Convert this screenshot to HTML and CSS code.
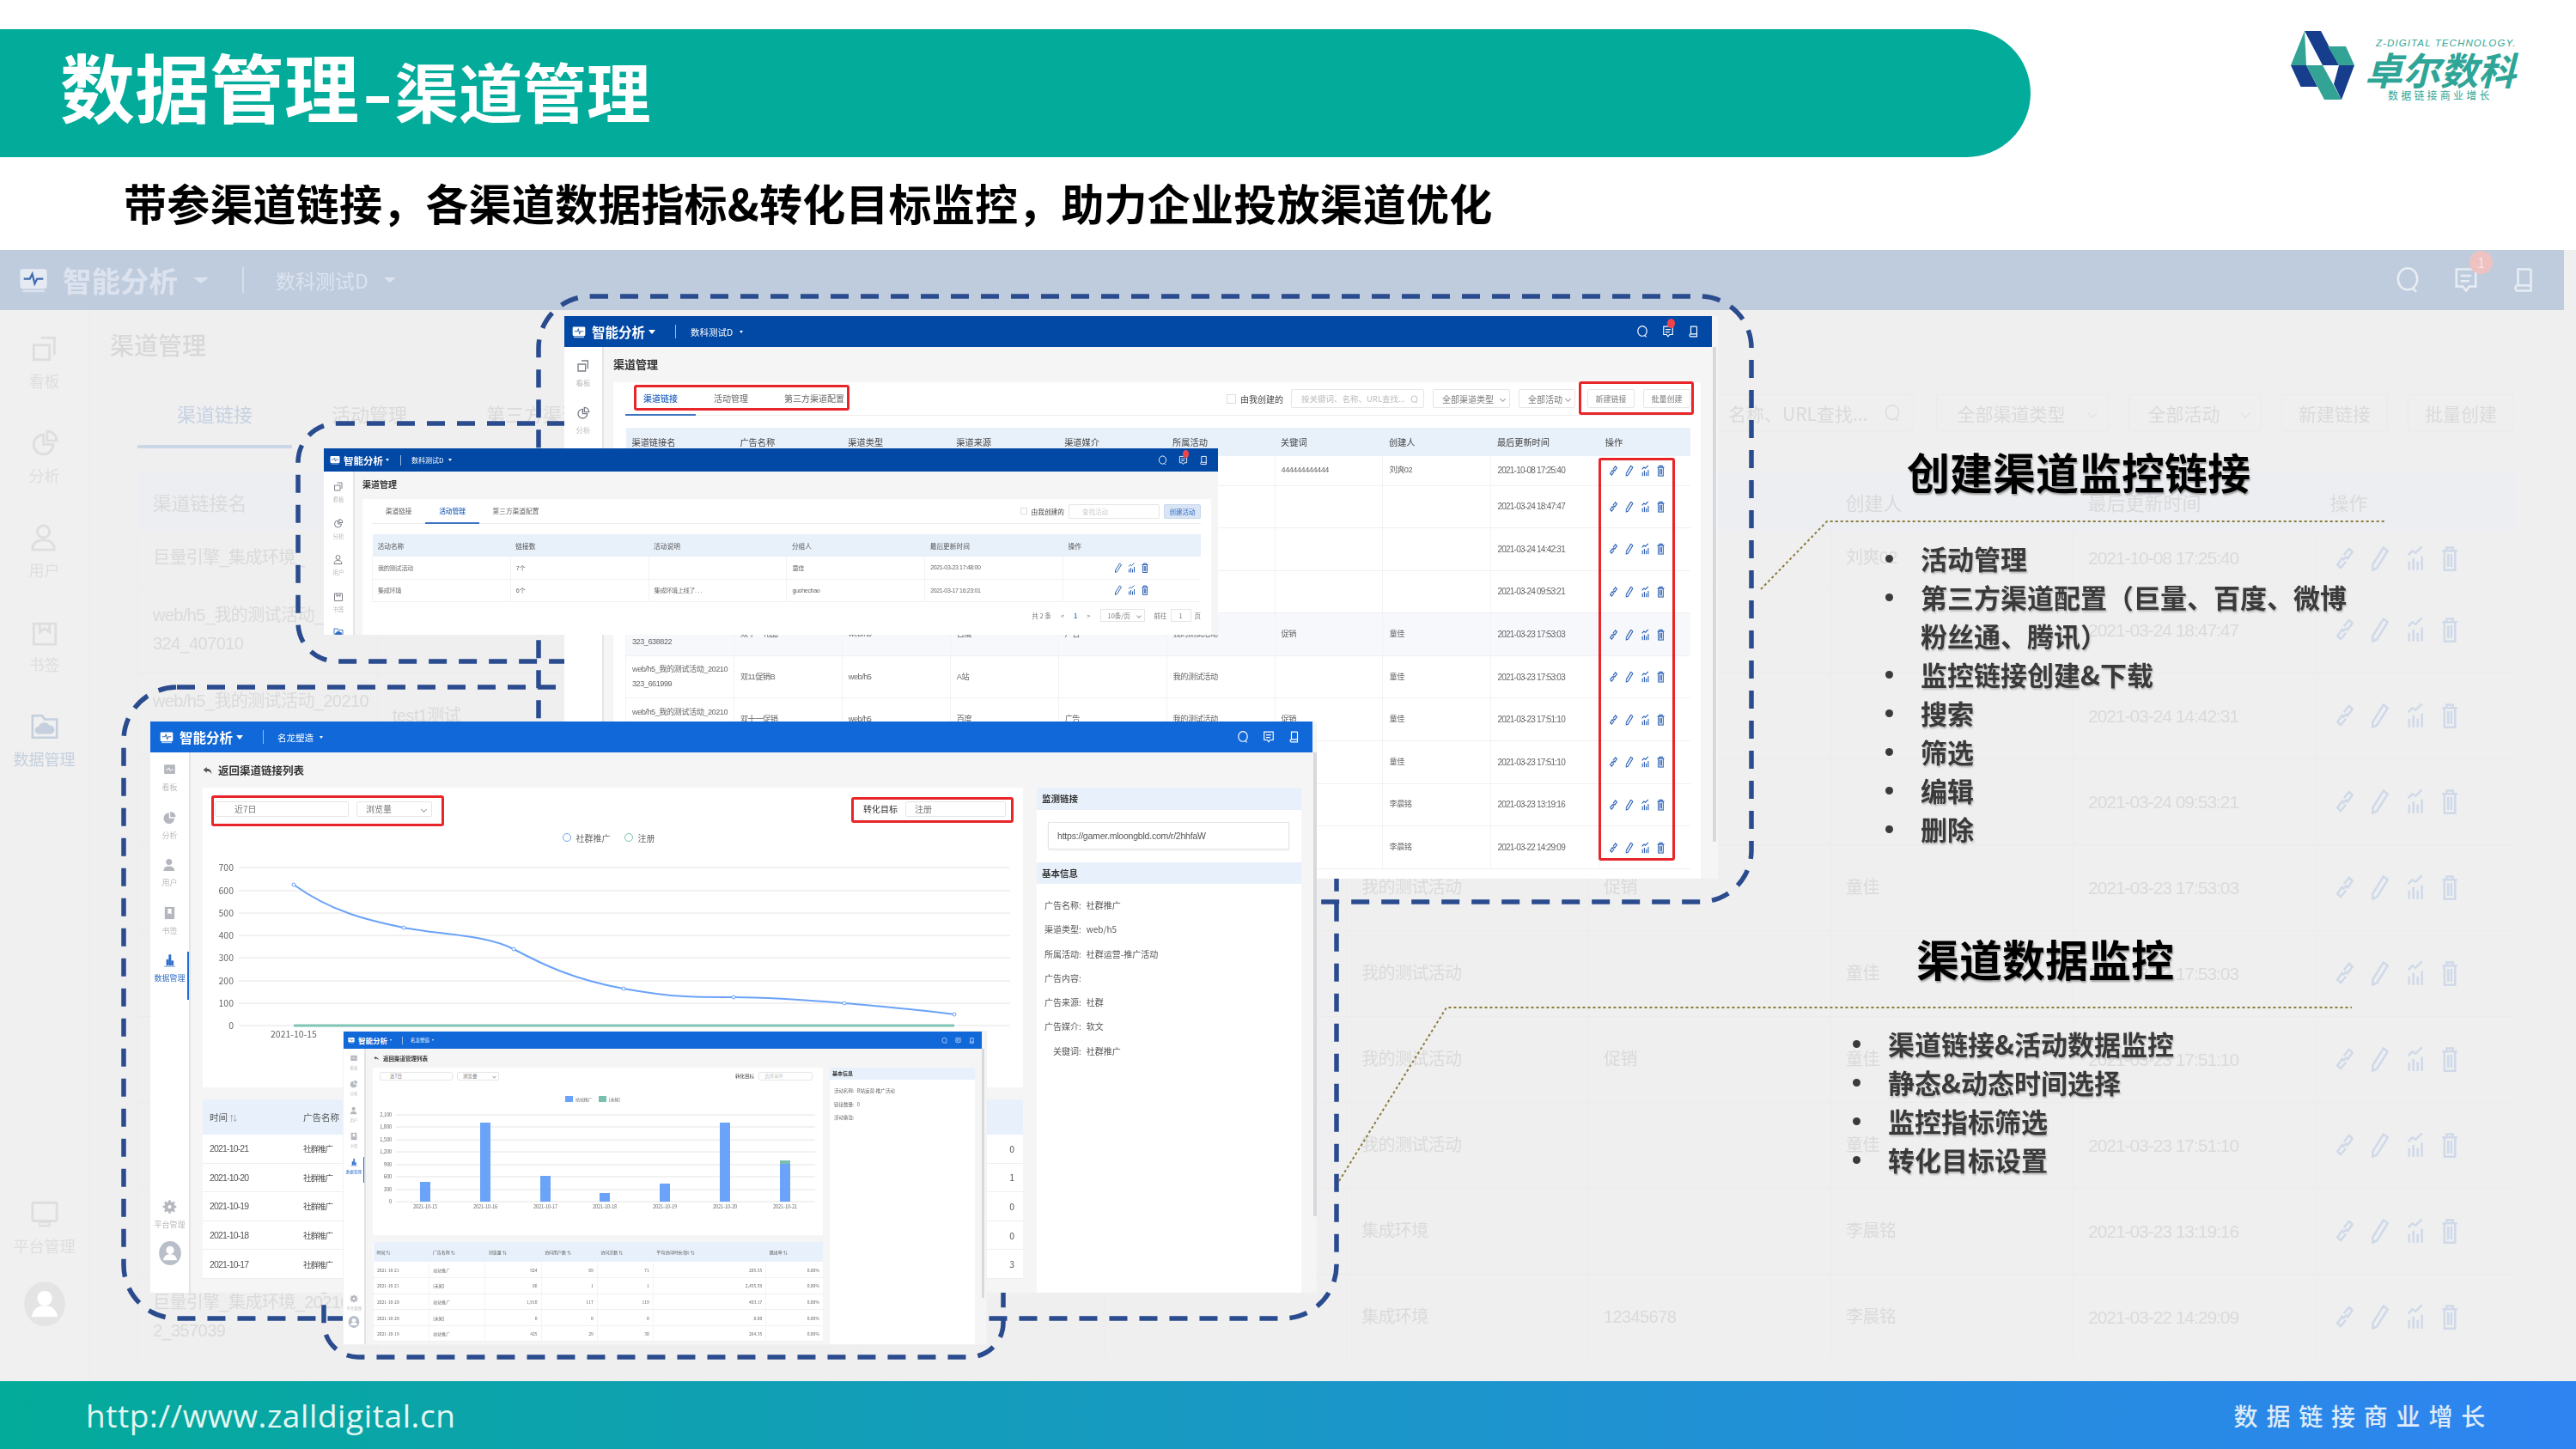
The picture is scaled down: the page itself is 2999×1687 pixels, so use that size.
FILE: index.html
```html
<!DOCTYPE html>
<html lang="zh-CN">
<head>
<meta charset="utf-8">
<title>数据管理-渠道管理</title>
<link rel="stylesheet" href="styles.css">
</head>
<body>
<svg class="defs" aria-hidden="true">
  <symbol id="i-board" viewBox="0 0 24 24"><path d="M9 3h11v14M3 9h13v12H3z" fill="none" stroke="currentColor" stroke-width="2"/></symbol>
  <symbol id="i-board2" viewBox="0 0 24 24"><rect x="3" y="4" width="18" height="15" rx="1" fill="currentColor"/><path d="M6 12h3l2-3 2 5 2-2h3" fill="none" stroke="#fff" stroke-width="1.4"/></symbol>
  <symbol id="i-pie" viewBox="0 0 24 24"><path d="M11 5a8 8 0 1 0 8 8h-8zM14 2a8 8 0 0 1 8 8h-8z" fill="none" stroke="currentColor" stroke-width="2"/></symbol>
  <symbol id="i-pie2" viewBox="0 0 24 24"><path d="M11 4a9 9 0 1 0 9 9h-9zM13 2a9 9 0 0 1 9 9h-9z" fill="currentColor"/></symbol>
  <symbol id="i-user" viewBox="0 0 24 24"><circle cx="11" cy="7" r="5" fill="none" stroke="currentColor" stroke-width="2"/><path d="M2 22c0-6 4-8 9-8s9 2 9 8z" fill="none" stroke="currentColor" stroke-width="2"/></symbol>
  <symbol id="i-user2" viewBox="0 0 24 24"><circle cx="11" cy="7" r="5" fill="currentColor"/><path d="M2 22c0-6 4-8 9-8s9 2 9 8z" fill="currentColor"/></symbol>
  <symbol id="i-mark" viewBox="0 0 24 24"><path d="M3 5h18v17H3zM8 5v7l4-3 4 3V5" fill="none" stroke="currentColor" stroke-width="2"/></symbol>
  <symbol id="i-mark2" viewBox="0 0 24 24"><path d="M4 2h16v20H4z" fill="currentColor"/><path d="M9 5v9l3-2 3 2V5" fill="#fff"/></symbol>
  <symbol id="i-folder" viewBox="0 0 24 24"><path d="M2 21V3h8l2 3h10v15z" fill="none" stroke="currentColor" stroke-width="1.8"/><path d="M7 18a3 3 0 0 1 0-6 5 5 0 0 1 9-1 3.500 3.500 0 0 1 1 7z" fill="currentColor"/></symbol>
  <symbol id="i-bars" viewBox="0 0 24 24"><path d="M3 22h18M7 20v-9h3v9zM11 20V3h3v17zM15 20v-7h3v7z" fill="currentColor" stroke="currentColor" stroke-width="1"/></symbol>
  <symbol id="i-gear" viewBox="0 0 24 24"><circle cx="12" cy="12" r="6" fill="none" stroke="currentColor" stroke-width="5"/><path d="M12 1v22M1 12h22M4 4l16 16M20 4L4 20" stroke="currentColor" stroke-width="3.500"/><circle cx="12" cy="12" r="3" fill="#fff"/></symbol>
  <symbol id="i-screen" viewBox="0 0 24 24"><rect x="2" y="3" width="20" height="15" rx="1" fill="none" stroke="currentColor" stroke-width="2"/><path d="M8 22h8v-3H8z" fill="none" stroke="currentColor" stroke-width="1.500"/></symbol>
  <symbol id="i-avatar" viewBox="0 0 24 24"><ellipse cx="12" cy="12" rx="11" ry="12" fill="currentColor"/><circle cx="12" cy="9" r="4" fill="#fff"/><path d="M5 19c1-5 4-6 7-6s6 1 7 6z" fill="#fff"/></symbol>
  <symbol id="i-link" viewBox="0 0 16 24"><path d="M7 9l5-6 3 3-5 7M9 15l-5 6-3-3 5-7M6 14l4-4" fill="none" stroke="currentColor" stroke-width="2"/></symbol>
  <symbol id="i-edit" viewBox="0 0 16 24"><path d="M11 2l4 3L5 21l-4 2 0-5z" fill="none" stroke="currentColor" stroke-width="2"/></symbol>
  <symbol id="i-chart" viewBox="0 0 16 24"><path d="M2 23v-8M6 23v-11M10 23v-8M14 23V10M1 9l4-4 3 2 6-6" fill="none" stroke="currentColor" stroke-width="2"/></symbol>
  <symbol id="i-trash" viewBox="0 0 16 24"><path d="M1 5h14M5 5V2h6v3M3 5v18h10V5M6.500 8v12M9.500 8v12" fill="none" stroke="currentColor" stroke-width="2"/></symbol>
  <symbol id="i-search" viewBox="0 0 24 24"><ellipse cx="12" cy="11" rx="9" ry="10" fill="none" stroke="currentColor" stroke-width="2"/><path d="M17 20l3 3" stroke="currentColor" stroke-width="2"/></symbol>
  <symbol id="i-msg" viewBox="0 0 24 24"><path d="M3 2h18v16h-6l-3 4-3-4H3zM7 8h10M7 13h8" fill="none" stroke="currentColor" stroke-width="2"/></symbol>
  <symbol id="i-book" viewBox="0 0 24 24"><path d="M18 2v20H6a2 2 0 0 1 0-5h12M6 17V2h12" fill="none" stroke="currentColor" stroke-width="2"/></symbol>
  <symbol id="i-logo" viewBox="0 0 24 20"><rect x="1" y="1" width="22" height="16" rx="2" fill="currentColor"/><path d="M4 9h5l2-4 2 8 2-4h5" fill="none" stroke="#3f6db0" stroke-width="1.600"/><path d="M3 18h18v2H3z" fill="currentColor" opacity=".7"/></symbol>
  <symbol id="i-back" viewBox="0 0 16 14"><path d="M1 6l6-5v3c5 0 8 3 8 9-2-4-4-5-8-5v3z" fill="currentColor"/></symbol>
  <symbol id="ops" viewBox="0 0 114 24"><use href="#i-link" x="0" width="16" height="24"/><use href="#i-edit" x="33" width="16" height="24"/><use href="#i-chart" x="66" width="16" height="24"/><use href="#i-trash" x="98" width="16" height="24"/></symbol>
</svg>

<div class="slide">
  <header class="head">
    <div class="head-top">
      <h1 class="title-bar"><span class="t-big">数据管理</span><span class="t-small"><span class="t-dash">-</span>渠道管理</span></h1>
      <div class="logo">
        <svg class="logo-mark" viewBox="0 0 74 81">
          <path d="M16 0L0 40h18z" fill="#33a396"/>
          <path d="M16 0h19l21 40H37z" fill="#173e8c"/>
          <path d="M43 18h21l10 22H56z" fill="#33a396"/>
          <path d="M0 40h18l13 25H11.500z" fill="#173e8c"/>
          <path d="M18 40h19l22 40H39z" fill="#33a396"/>
          <path d="M56 40h18L59 80 50 62z" fill="#173e8c"/>
        </svg>
        <div class="logo-text">
          <span class="logo-en">Z-DIGITAL TECHNOLOGY.</span>
          <span class="logo-cn">卓尔数科</span>
          <span class="logo-sub">数据链接商业增长</span>
        </div>
      </div>
    </div>
    <p class="subtitle">带参渠道链接，各渠道数据指标&amp;转化目标监控，助力企业投放渠道优化</p>
  </header>

  <section class="bg">
    <div class="bg-bar">
      <svg class="bg-logo"><use href="#i-logo"/></svg>
      <b class="bg-brand">智能分析</b><i class="caret bg-caret"></i>
      <i class="bg-div"></i>
      <span class="bg-org">数科测试D</span><i class="caret bg-caret2"></i>
      <div class="bg-bar-icons">
        <svg class="bg-ic"><use href="#i-search"/></svg>
        <span class="bg-msg"><svg class="bg-ic"><use href="#i-msg"/></svg><em class="bg-badge">1</em></span>
        <svg class="bg-ic"><use href="#i-book"/></svg>
      </div>
    </div>
    <div class="bg-body">
      <nav class="bg-side">
        <div class="bg-item"><svg><use href="#i-board"/></svg><span>看板</span></div>
        <div class="bg-item"><svg><use href="#i-pie"/></svg><span>分析</span></div>
        <div class="bg-item"><svg><use href="#i-user"/></svg><span>用户</span></div>
        <div class="bg-item"><svg><use href="#i-mark"/></svg><span>书签</span></div>
        <div class="bg-item bg-item-on"><svg><use href="#i-folder"/></svg><span>数据管理</span></div>
        <div class="bg-item bg-item-end"><svg><use href="#i-screen"/></svg><span>平台管理</span></div>
        <svg class="bg-avatar"><use href="#i-avatar"/></svg>
      </nav>
      <div class="bg-main">
        <h2 class="bg-title">渠道管理</h2>
        <div class="bg-head">
          <span class="bg-tab bg-tab-on">渠道链接</span><span class="bg-tab">活动管理</span><span class="bg-tab">第三方渠道配置</span>
          <div class="bg-filters">
            <span class="bg-ctl bg-input">按关键词、名称、URL查找...<svg class="bg-q"><use href="#i-search"/></svg></span>
            <span class="bg-ctl bg-sel1">全部渠道类型<i class="chev"></i></span>
            <span class="bg-ctl bg-sel2">全部活动<i class="chev"></i></span>
            <span class="bg-ctl bg-btn">新建链接</span>
            <span class="bg-ctl bg-btn">批量创建</span>
          </div>
        </div>
        <table class="bg-tbl">
          <thead><tr><th>渠道链接名</th><th>广告名称</th><th>渠道类型</th><th>渠道来源</th><th>渠道媒介</th><th>所属活动</th><th>关键词</th><th>创建人</th><th>最后更新时间</th><th>操作</th></tr></thead>
          <tbody>
            <tr><td>巨量引擎_集成环境_</td><td></td><td></td><td></td><td></td><td></td><td>444444444444</td><td>刘爽02</td><td class="num">2021-10-08 17:25:40</td><td><svg class="bg-ops"><use href="#ops"/></svg></td></tr>
            <tr><td>web/h5_我的测试活动_20210<br>324_407010</td><td></td><td></td><td></td><td></td><td></td><td></td><td></td><td class="num">2021-03-24 18:47:47</td><td><svg class="bg-ops"><use href="#ops"/></svg></td></tr>
            <tr><td>web/h5_我的测试活动_20210<br>324_407011</td><td>test1测试</td><td></td><td></td><td></td><td></td><td></td><td></td><td class="num">2021-03-24 14:42:31</td><td><svg class="bg-ops"><use href="#ops"/></svg></td></tr>
            <tr><td></td><td></td><td></td><td></td><td></td><td></td><td></td><td></td><td class="num">2021-03-24 09:53:21</td><td><svg class="bg-ops"><use href="#ops"/></svg></td></tr>
            <tr><td></td><td></td><td></td><td></td><td></td><td>我的测试活动</td><td>促销</td><td>童佳</td><td class="num">2021-03-23 17:53:03</td><td><svg class="bg-ops"><use href="#ops"/></svg></td></tr>
            <tr><td></td><td></td><td></td><td></td><td></td><td>我的测试活动</td><td></td><td>童佳</td><td class="num">2021-03-23 17:53:03</td><td><svg class="bg-ops"><use href="#ops"/></svg></td></tr>
            <tr><td></td><td></td><td></td><td></td><td></td><td>我的测试活动</td><td>促销</td><td>童佳</td><td class="num">2021-03-23 17:51:10</td><td><svg class="bg-ops"><use href="#ops"/></svg></td></tr>
            <tr><td></td><td></td><td></td><td></td><td></td><td>我的测试活动</td><td></td><td>童佳</td><td class="num">2021-03-23 17:51:10</td><td><svg class="bg-ops"><use href="#ops"/></svg></td></tr>
            <tr><td></td><td></td><td></td><td></td><td></td><td>集成环境</td><td></td><td>李晨铭</td><td class="num">2021-03-23 13:19:16</td><td><svg class="bg-ops"><use href="#ops"/></svg></td></tr>
            <tr><td>巨量引擎_集成环境_20210<br>2_357039</td><td></td><td></td><td></td><td></td><td>集成环境</td><td>12345678</td><td>李晨铭</td><td class="num">2021-03-22 14:29:09</td><td><svg class="bg-ops"><use href="#ops"/></svg></td></tr>
          </tbody>
        </table>
      </div>
    </div>
  </section>

  <footer class="foot">
    <span class="foot-url">http://www.zalldigital.cn</span>
    <span class="foot-slogan">数据链接商业增长</span>
  </footer>

  <svg class="dashes" viewBox="0 0 2999 1687">
    <rect x="627" y="345" width="1412" height="705" rx="60"/>
    <rect x="347" y="493" width="900" height="277" rx="45"/>
    <rect x="144" y="800" width="1412" height="735" rx="62"/>
    <rect x="377" y="1150" width="791" height="430" rx="40"/>
  </svg>

  <!-- window A -->
  <section class="win win-a">
    <div class="win-bar">
      <svg class="w-logo"><use href="#i-logo"/></svg><b class="w-brand">智能分析</b><i class="caret"></i><i class="w-div"></i><span class="w-org">数科测试D</span><i class="caret"></i>
      <div class="w-icons"><svg><use href="#i-search"/></svg><span class="w-msg"><svg><use href="#i-msg"/></svg><em class="w-badge"></em></span><svg><use href="#i-book"/></svg></div>
    </div>
    <div class="win-body">
      <nav class="win-side">
        <div class="w-item"><svg><use href="#i-board"/></svg><span>看板</span></div>
        <div class="w-item"><svg><use href="#i-pie"/></svg><span>分析</span></div>
      </nav>
      <div class="win-main">
        <h3 class="w-title">渠道管理</h3>
        <div class="w-card">
          <div class="w-head">
            <span class="w-tab w-tab-on">渠道链接</span><span class="w-tab">活动管理</span><span class="w-tab">第三方渠道配置</span>
            <div class="w-filters">
              <i class="w-check"></i><span class="w-mine">由我创建的</span>
              <span class="w-ctl a-input">按关键词、名称、URL查找...<svg class="w-q"><use href="#i-search"/></svg></span>
              <span class="w-ctl a-sel1">全部渠道类型<i class="chev"></i></span>
              <span class="w-ctl a-sel2">全部活动<i class="chev"></i></span>
              <span class="w-ctl a-btn">新建链接</span>
              <span class="w-ctl a-btn">批量创建</span>
            </div>
          </div>
          <table class="a-tbl">
            <thead><tr><th>渠道链接名</th><th>广告名称</th><th>渠道类型</th><th>渠道来源</th><th>渠道媒介</th><th>所属活动</th><th>关键词</th><th>创建人</th><th>最后更新时间</th><th>操作</th></tr></thead>
            <tbody>
              <tr class="r1"><td></td><td></td><td></td><td></td><td></td><td></td><td>444444444444</td><td>刘爽02</td><td class="num">2021-10-08 17:25:40</td><td><svg class="a-ops"><use href="#ops"/></svg></td></tr>
              <tr><td></td><td></td><td></td><td></td><td></td><td></td><td></td><td></td><td class="num">2021-03-24 18:47:47</td><td><svg class="a-ops"><use href="#ops"/></svg></td></tr>
              <tr><td></td><td></td><td></td><td></td><td></td><td></td><td></td><td></td><td class="num">2021-03-24 14:42:31</td><td><svg class="a-ops"><use href="#ops"/></svg></td></tr>
              <tr><td></td><td></td><td></td><td></td><td></td><td></td><td></td><td></td><td class="num">2021-03-24 09:53:21</td><td><svg class="a-ops"><use href="#ops"/></svg></td></tr>
              <tr class="r-tint"><td>web/h5_我的测试活动_20210<br>323_638822</td><td>双十一礼品</td><td>web/h5</td><td>百度</td><td>广告</td><td>我的测试活动</td><td>促销</td><td>童佳</td><td class="num">2021-03-23 17:53:03</td><td><svg class="a-ops"><use href="#ops"/></svg></td></tr>
              <tr><td>web/h5_我的测试活动_20210<br>323_661999</td><td>双11促销B</td><td>web/h5</td><td>A站</td><td></td><td>我的测试活动</td><td></td><td>童佳</td><td class="num">2021-03-23 17:53:03</td><td><svg class="a-ops"><use href="#ops"/></svg></td></tr>
              <tr><td>web/h5_我的测试活动_20210<br>323_561289</td><td>双十一促销</td><td>web/h5</td><td>百度</td><td>广告</td><td>我的测试活动</td><td>促销</td><td>童佳</td><td class="num">2021-03-23 17:51:10</td><td><svg class="a-ops"><use href="#ops"/></svg></td></tr>
              <tr><td></td><td></td><td></td><td></td><td></td><td></td><td></td><td>童佳</td><td class="num">2021-03-23 17:51:10</td><td><svg class="a-ops"><use href="#ops"/></svg></td></tr>
              <tr><td></td><td></td><td></td><td></td><td></td><td></td><td></td><td>李晨铭</td><td class="num">2021-03-23 13:19:16</td><td><svg class="a-ops"><use href="#ops"/></svg></td></tr>
              <tr><td></td><td></td><td></td><td></td><td></td><td></td><td></td><td>李晨铭</td><td class="num">2021-03-22 14:29:09</td><td><svg class="a-ops"><use href="#ops"/></svg></td></tr>
            </tbody>
          </table>
        </div>
      </div>
      <i class="w-scroll"></i>
    </div>
    <i class="red a-red1"></i><i class="red a-red2"></i><i class="red a-red3"></i>
  </section>

  <!-- window B -->
  <section class="win win-b">
    <div class="win-bar">
      <svg class="w-logo"><use href="#i-logo"/></svg><b class="w-brand">智能分析</b><i class="caret"></i><i class="w-div"></i><span class="w-org">数科测试D</span><i class="caret"></i>
      <div class="w-icons"><svg><use href="#i-search"/></svg><span class="w-msg"><svg><use href="#i-msg"/></svg><em class="w-badge"></em></span><svg><use href="#i-book"/></svg></div>
    </div>
    <div class="win-body">
      <nav class="win-side">
        <div class="w-item"><svg><use href="#i-board"/></svg><span>看板</span></div>
        <div class="w-item"><svg><use href="#i-pie"/></svg><span>分析</span></div>
        <div class="w-item"><svg><use href="#i-user"/></svg><span>用户</span></div>
        <div class="w-item"><svg><use href="#i-mark"/></svg><span>书签</span></div>
        <div class="w-item w-on"><svg><use href="#i-folder"/></svg><span>数据管理</span></div>
      </nav>
      <div class="win-main">
        <h3 class="w-title">渠道管理</h3>
        <div class="w-card">
          <div class="w-head">
            <span class="w-tab">渠道链接</span><span class="w-tab w-tab-on">活动管理</span><span class="w-tab">第三方渠道配置</span>
            <div class="w-filters">
              <i class="w-check"></i><span class="w-mine">由我创建的</span>
              <span class="w-ctl b-input">查找活动</span>
              <span class="w-ctl b-btn">创建活动</span>
            </div>
          </div>
          <table class="b-tbl">
            <thead><tr><th>活动名称</th><th>链接数</th><th>活动说明</th><th>分组人</th><th>最后更新时间</th><th>操作</th></tr></thead>
            <tbody>
              <tr><td>我的测试活动</td><td>7个</td><td></td><td>童佳</td><td class="num">2021-03-23 17:48:00</td><td class="b-op"><svg class="b-ops"><use href="#i-edit" x="0" width="8" height="12"/><use href="#i-chart" x="15.500" width="8" height="12"/><use href="#i-trash" x="31" width="8" height="12"/></svg></td></tr>
              <tr><td>集成环境</td><td>6个</td><td>集成环境上线了. . .</td><td>guohechao</td><td class="num">2021-03-17 16:23:01</td><td class="b-op"><svg class="b-ops"><use href="#i-edit" x="0" width="8" height="12"/><use href="#i-chart" x="15.500" width="8" height="12"/><use href="#i-trash" x="31" width="8" height="12"/></svg></td></tr>
            </tbody>
          </table>
          <div class="b-pager"><span>共 2 条</span><span class="b-nav">&lt;</span><b>1</b><span class="b-nav">&gt;</span><span class="b-size">10条/页<i class="chev"></i></span><span>前往</span><span class="b-jump">1</span><span>页</span></div>
        </div>
      </div>
    </div>
  </section>

  <!-- window C -->
  <section class="win win-c">
    <div class="win-bar">
      <svg class="w-logo"><use href="#i-logo"/></svg><b class="w-brand">智能分析</b><i class="caret"></i><i class="w-div"></i><span class="w-org">名龙塑造</span><i class="caret"></i>
      <div class="w-icons"><svg><use href="#i-search"/></svg><span class="w-msg"><svg><use href="#i-msg"/></svg></span><svg><use href="#i-book"/></svg></div>
    </div>
    <div class="win-body">
      <nav class="win-side">
        <div class="w-item"><svg><use href="#i-board2"/></svg><span>看板</span></div>
        <div class="w-item"><svg><use href="#i-pie2"/></svg><span>分析</span></div>
        <div class="w-item"><svg><use href="#i-user2"/></svg><span>用户</span></div>
        <div class="w-item"><svg><use href="#i-mark2"/></svg><span>书签</span></div>
        <div class="w-item w-on w-active"><svg><use href="#i-bars"/></svg><span>数据管理</span></div>
        <div class="w-item w-end"><svg><use href="#i-gear"/></svg><span>平台管理</span></div>
        <svg class="w-avatar"><use href="#i-avatar"/></svg>
      </nav>
      <div class="win-main">
        <div class="w-back"><svg class="w-arrow"><use href="#i-back"/></svg><h3>返回渠道链接列表</h3></div>
        <div class="d-cols">
          <div class="d-left">
            <div class="d-card">
              <div class="d-filters">
                <span class="w-ctl d-range">近7日</span>
                <span class="w-ctl d-metric">浏览量<i class="chev"></i></span>
                <span class="d-goal">转化目标</span>
                <span class="w-ctl d-goalv">注册</span>
              </div>
              <div class="d-legend"><i class="lg-dot lg-blue"></i><span>社群推广</span><i class="lg-dot lg-green"></i><span>注册</span></div>
              <svg class="d-chart" viewBox="0 0 955 276">
                <g class="grid">
                  <path d="M42 20H940M42 47H940M42 73H940M42 99H940M42 125H940M42 152H940M42 178H940M42 204H940"/>
                </g>
                <g class="axis">
                  <text x="36" y="24">700</text><text x="36" y="51">600</text><text x="36" y="77">500</text><text x="36" y="103">400</text><text x="36" y="129">300</text><text x="36" y="156">200</text><text x="36" y="182">100</text><text x="36" y="208">0</text>
                </g>
                <path class="line-blue" d="M106 40C150 72 195 82 234 90S330 98 362 115S430 150 490 161S580 171 618 171S700 174 747 178S830 185 875 191"/>
                <path class="line-green" d="M106 204H875"/>
                <g class="pts">
                  <circle cx="106" cy="40" r="2"/><circle cx="234" cy="90" r="2"/><circle cx="362" cy="115" r="2"/><circle cx="490" cy="161" r="2"/><circle cx="618" cy="171" r="2"/><circle cx="747" cy="178" r="2"/><circle cx="875" cy="191" r="2"/>
                </g>
                <g class="xlab">
                  <text x="106" y="218">2021-10-15</text><text x="234" y="218">2021-10-16</text><text x="362" y="218">2021-10-17</text><text x="490" y="218">2021-10-18</text><text x="618" y="218">2021-10-19</text><text x="747" y="218">2021-10-20</text><text x="875" y="218">2021-10-21</text>
                </g>
              </svg>
            </div>
            <div class="c-tbl">
              <div class="c-row c-hd"><span>时间 <i class="sort">&#8645;</i></span><span>广告名称</span><span></span><span></span></div>
              <div class="c-row"><span class="num">2021-10-21</span><span>社群推广</span><span></span><span>0</span></div>
              <div class="c-row"><span class="num">2021-10-20</span><span>社群推广</span><span></span><span>1</span></div>
              <div class="c-row"><span class="num">2021-10-19</span><span>社群推广</span><span></span><span>0</span></div>
              <div class="c-row"><span class="num">2021-10-18</span><span>社群推广</span><span></span><span>0</span></div>
              <div class="c-row"><span class="num">2021-10-17</span><span>社群推广</span><span></span><span>3</span></div>
            </div>
          </div>
          <aside class="d-panel">
            <div class="d-phead">监测链接</div>
            <div class="c-url">https://gamer.mloongbld.com/r/2hhfaW</div>
            <div class="d-phead">基本信息</div>
            <dl class="d-info">
              <div><dt>广告名称:</dt><dd>社群推广</dd></div>
              <div><dt>渠道类型:</dt><dd>web/h5</dd></div>
              <div><dt>所属活动:</dt><dd>社群运营-推广活动</dd></div>
              <div><dt>广告内容:</dt><dd></dd></div>
              <div><dt>广告来源:</dt><dd>社群</dd></div>
              <div><dt>广告媒介:</dt><dd>软文</dd></div>
              <div class="d-kw"><dt>关键词:</dt><dd>社群推广</dd></div>
            </dl>
          </aside>
        </div>
      </div>
      <i class="w-scroll"></i>
    </div>
    <i class="red c-red1"></i><i class="red c-red2"></i>
  </section>

  <!-- window D -->
  <section class="win win-d">
    <div class="win-bar">
      <svg class="w-logo"><use href="#i-logo"/></svg><b class="w-brand">智能分析</b><i class="caret"></i><i class="w-div"></i><span class="w-org">名龙塑造</span><i class="caret"></i>
      <div class="w-icons"><svg><use href="#i-search"/></svg><span class="w-msg"><svg><use href="#i-msg"/></svg></span><svg><use href="#i-book"/></svg></div>
    </div>
    <div class="win-body">
      <nav class="win-side">
        <div class="w-item"><svg><use href="#i-board2"/></svg><span>看板</span></div>
        <div class="w-item"><svg><use href="#i-pie2"/></svg><span>分析</span></div>
        <div class="w-item"><svg><use href="#i-user2"/></svg><span>用户</span></div>
        <div class="w-item"><svg><use href="#i-mark2"/></svg><span>书签</span></div>
        <div class="w-item w-on w-active"><svg><use href="#i-bars"/></svg><span>数据管理</span></div>
        <div class="w-item w-end"><svg><use href="#i-gear"/></svg><span>平台管理</span></div>
        <svg class="w-avatar"><use href="#i-avatar"/></svg>
      </nav>
      <div class="win-main">
        <div class="w-back"><svg class="w-arrow"><use href="#i-back"/></svg><h3>返回渠道管理列表</h3></div>
        <div class="d-cols">
          <div class="d-left">
            <div class="d-card">
              <div class="d-filters">
                <span class="w-ctl d-range">近7日</span>
                <span class="w-ctl d-metric">浏览量<i class="chev"></i></span>
                <span class="d-goal">转化目标</span>
                <span class="w-ctl d-goalv">选择事件</span>
              </div>
              <div class="d-legend"><i class="lg-sq lg-blue"></i><span>站站推广</span><i class="lg-sq lg-green"></i><span>[未知]</span></div>
              <svg class="d-chart" viewBox="0 0 524 148">
                <g class="grid"><path d="M27 8H515M27 22H515M27 37H515M27 51H515M27 66H515M27 80H515M27 95H515M27 109H515"/></g>
                <g class="axis">
                  <text x="22" y="10">2,100</text><text x="22" y="24">1,800</text><text x="22" y="39">1,500</text><text x="22" y="53">1,200</text><text x="22" y="68">900</text><text x="22" y="82">600</text><text x="22" y="97">300</text><text x="22" y="111">0</text>
                </g>
                <g class="bars">
                  <rect x="55" y="86" width="12" height="23"/><rect x="125" y="17" width="12" height="92"/><rect x="195" y="79" width="12" height="30"/><rect x="264" y="99" width="12" height="10"/><rect x="334" y="88" width="12" height="21"/><rect x="404" y="17" width="12" height="92"/><rect x="474" y="65" width="12" height="44"/>
                </g>
                <rect class="bar-g" x="474" y="61" width="12" height="4"/>
                <g class="xlab">
                  <text x="61" y="117">2021-10-15</text><text x="131" y="117">2021-10-16</text><text x="201" y="117">2021-10-17</text><text x="270" y="117">2021-10-18</text><text x="340" y="117">2021-10-19</text><text x="410" y="117">2021-10-20</text><text x="480" y="117">2021-10-21</text>
                </g>
              </svg>
            </div>
            <table class="d-tbl">
              <thead><tr><th>时间 ⇅</th><th>广告名称 ⇅</th><th>浏览量 ⇅</th><th>访问用户数 ⇅</th><th>访问次数 ⇅</th><th>平均访问时长(秒) ⇅</th><th>跳出率 ⇅</th></tr></thead>
              <tbody>
                <tr><td>2021-10-21</td><td>站站推广</td><td>924</td><td>69</td><td>71</td><td>285.55</td><td>0.00%</td></tr>
                <tr><td>2021-10-21</td><td>[未知]</td><td>66</td><td>1</td><td>1</td><td>2,455.59</td><td>0.00%</td></tr>
                <tr><td>2021-10-20</td><td>站站推广</td><td>1,910</td><td>117</td><td>119</td><td>403.17</td><td>0.00%</td></tr>
                <tr><td>2021-10-20</td><td>[未知]</td><td>0</td><td>0</td><td>0</td><td>0.00</td><td>0.00%</td></tr>
                <tr><td>2021-10-19</td><td>站站推广</td><td>425</td><td>29</td><td>30</td><td>264.35</td><td>0.00%</td></tr>
              </tbody>
            </table>
          </div>
          <aside class="d-panel">
            <div class="d-phead">基本信息</div>
            <dl class="d-info">
              <div><dt>活动名称:</dt><dd>B站运营-推广活动</dd></div>
              <div><dt>链接数量:</dt><dd>0</dd></div>
              <div><dt>活动备注:</dt><dd></dd></div>
            </dl>
          </aside>
        </div>
      </div>
      <i class="w-scroll"></i>
    </div>
  </section>

  <svg class="leaders" viewBox="0 0 2999 1687">
    <path d="M2050 686L2127 607H2777"/>
    <path d="M1559 1375L1684 1173H2738"/>
  </svg>

  <aside class="note note-a">
    <h2 class="note-title">创建渠道监控链接</h2>
    <ul class="note-list">
      <li>活动管理</li>
      <li>第三方渠道配置（巨量、百度、微博<br>粉丝通、腾讯）</li>
      <li>监控链接创建&amp;下载</li>
      <li>搜索</li>
      <li>筛选</li>
      <li>编辑</li>
      <li>删除</li>
    </ul>
  </aside>
  <aside class="note note-b">
    <h2 class="note-title">渠道数据监控</h2>
    <ul class="note-list">
      <li>渠道链接&amp;活动数据监控</li>
      <li>静态&amp;动态时间选择</li>
      <li>监控指标筛选</li>
      <li>转化目标设置</li>
    </ul>
  </aside>
</div>
</body>
</html>
```

FILE: styles.css
```css
*{box-sizing:border-box;margin:0;padding:0}
html,body{background:#fff}
body{width:2999px;height:1687px;overflow:hidden;font-family:"Noto Sans CJK SC","Noto Sans",sans-serif}
i,em{font-style:normal}
.defs{position:absolute;width:0;height:0}
.num{letter-spacing:-.05em;font-family:"Liberation Sans","Noto Sans CJK SC",sans-serif}

.slide{position:relative;width:2999px;height:1687px;overflow:hidden;display:flex;flex-direction:column}

/* header */
.head{height:291px;padding-top:34px;flex:none}
.head-top{display:flex;align-items:flex-start}
.title-bar{width:2364px;height:149px;background:#03AB9A;border-radius:0 75px 75px 0;color:#fff;display:flex;align-items:baseline;padding-left:70px;font-weight:700;line-height:131px;letter-spacing:0}
.t-big{font-size:87px}
.t-small{font-size:74.500px}
.t-dash{display:inline-block;margin:0 6px 0 8px;transform:scaleX(1.3)}
.logo{display:flex;margin:2px 0 0 303px;gap:12px}
.logo-mark{width:74px;height:81px;flex:none}
.logo-text{display:flex;flex-direction:column;color:#2fa597;width:180px;align-items:flex-start;padding-top:6px}
.logo-en{font:italic 400 11.500px/16px "Liberation Sans",sans-serif;letter-spacing:1.100px;margin-left:13px;white-space:nowrap}
.logo-cn{font-size:44px;font-weight:700;font-style:italic;line-height:44px;white-space:nowrap}
.logo-sub{font-size:12px;line-height:18px;letter-spacing:3.200px;margin-left:27px;white-space:nowrap}
.subtitle{margin:20px 0 0 144px;font-size:50px;font-weight:700;line-height:64px;color:#000;white-space:nowrap;letter-spacing:.2px}

/* faded background app */
.bg{flex:1;background:#EFEFF0;display:flex;flex-direction:column;min-height:0;filter:blur(.5px)}
.bg-bar{height:70px;width:2985px;background:#BFCCDE;flex:none;display:flex;align-items:center;padding-left:22px;color:#DCE3EE}
.bg-logo{width:34px;height:30px;margin-right:17px;color:#E6EBF3}
.bg-brand{font-size:33.500px;letter-spacing:0;line-height:70px}
.caret{display:inline-block;width:0;height:0;border-left:4px solid transparent;border-right:4px solid transparent;border-top:5px solid #fff}
.bg-caret{border-width:7px 9px 0;border-top-color:#DCE3EE;margin-left:18px}
.bg-div{width:2px;height:30px;background:#D7DEE9;margin:0 37px 0 39px}
.bg-org{font-size:23px}
.bg-caret2{border-width:6px 7px 0;border-top-color:#DCE3EE;margin-left:18px}
.bg-bar-icons{margin-left:auto;display:flex;gap:38px;padding-right:31px;align-items:center}
.bg-ic{width:30px;height:38px;color:#E8EDF4;display:block}
.bg-msg{position:relative;display:block}
.bg-badge{position:absolute;left:19px;top:-15px;width:27px;height:27px;border-radius:50%;background:#EFC2C2;color:#F7E3E3;font-size:16px;text-align:center;line-height:27px}
.bg-body{flex:1;display:flex;min-height:0}
.bg-side{width:104px;flex:none;background:#F0F0F0;display:flex;flex-direction:column;align-items:center;padding-top:28px;border-right:1px solid #ECECEC}
.bg-item{height:110px;display:flex;flex-direction:column;align-items:center;color:#DEDEDE;font-size:18px}
.bg-item svg{width:36px;height:34px;margin-bottom:8px}
.bg-item span{line-height:24px;white-space:nowrap}
.bg-item-on{color:#C5CFDE}
.bg-item-end{margin-top:auto;height:auto;margin-bottom:30px}
.bg-avatar{width:56px;height:52px;color:#E4E4E4;margin-bottom:64px}
.bg-main{flex:1;min-width:0;padding-left:24px}
.bg-title{font-size:28px;font-weight:500;color:#D8D8D8;line-height:40px;padding:20px 0 21px 0}
.bg-head{display:flex;margin-left:32px;width:2767px;height:80px;align-items:flex-start}
.bg-tab{padding:0 46px;text-align:center;font-size:22px;color:#DADADA;height:80px;line-height:78px;flex:none;white-space:nowrap}
.bg-tab-on{color:#C6D1E0;border-bottom:4px solid #CBD6E6}
.bg-filters{margin-left:auto;display:flex;gap:23px;padding-top:17px}
.bg-ctl{height:43px;border:1px solid #EAEAEA;border-radius:3px;color:#DADADA;font-size:21px;line-height:40px;display:flex;align-items:center;justify-content:center;white-space:nowrap;position:relative}
.bg-input{width:340px;justify-content:flex-start;padding-left:18px;margin-right:3px}
.bg-q{width:20px;height:26px;position:absolute;right:14px;top:8px;color:#DEDEDE}
.bg-sel1{width:201px;padding-right:26px}
.bg-sel2{width:155px;padding-right:26px}
.bg-btn{width:124px}
.chev{position:absolute;right:14px;top:42%;width:8px;height:8px;border-right:1px solid currentColor;border-bottom:1px solid currentColor;transform:rotate(45deg);opacity:.7}
.bg-tbl{margin:28px 0 0 32px;border-collapse:collapse;table-layout:fixed;width:2767px;font-size:22px;color:#DADADA;font-family:"Liberation Sans","Noto Sans CJK SC",sans-serif}
.bg-tbl th{height:67px;background:#ECEEF2;font-weight:400;text-align:left;padding-left:17px}
.bg-tbl th:first-child,.bg-tbl td:first-child{width:279px}
.bg-tbl th:nth-child(n+2){width:282px}
.bg-tbl th:last-child{width:232px}
.bg-tbl td{height:100px;padding-left:17px;line-height:33px;border-bottom:1px solid #EBEBEB;border-left:1px solid #ECECEC;white-space:nowrap;overflow:visible;font-size:20px;letter-spacing:-.6px}
.bg-tbl .num{font-size:21px;letter-spacing:-1.050px}
.bg-tbl tbody tr:first-child td{height:66px}
.bg-ops{width:142px;height:30px;color:#CFD9E8;display:block;margin-left:7px}

/* dashes */
.dashes{position:absolute;left:0;top:0;width:2999px;height:1687px;fill:none;stroke:#2A4B8D;stroke-width:5.500;stroke-dasharray:21 14}
.dashes rect{fill:none}
.leaders{position:absolute;left:0;top:0;width:2999px;height:1687px;fill:none;stroke:#8C7C38;stroke-width:2;stroke-dasharray:3 3}

/* windows on canvas */
.win{position:absolute;display:flex;flex-direction:column;background:#F5F5F5;overflow:hidden;color:#666;filter:blur(.35px)}
.win-bar{display:flex;align-items:center;color:#fff;flex:none;position:relative}
.w-div{display:block;background:#9DB8DD;width:1px}
.w-icons{margin-left:auto;display:flex;align-items:center}
.w-msg{display:block;position:relative}
.w-badge{position:absolute;border-radius:50%;background:#F0444C;display:block}
.win-body{flex:1;display:flex;min-height:0;position:relative}
.win-side{flex:none;background:#fff;border-right:2px solid #E4E4E4;display:flex;flex-direction:column;align-items:center;color:#555;overflow:hidden}
.w-item{display:flex;flex-direction:column;align-items:center;flex:none;color:#7A7F87}
.win-c .w-item,.win-d .w-item{color:#B4B8BE}
.w-item span{white-space:nowrap;color:#BBB}
.win-c .w-on,.win-d .w-on,.w-on,.w-on span{color:#2E6BC6}
.w-active{position:relative;align-self:stretch}
.w-active::after{content:"";position:absolute;right:0;top:0;bottom:0;background:#1A6CDA}
.w-end{margin-top:auto}
.w-avatar{color:#B8BFC8;flex:none}
.win-main{flex:1;min-width:0;display:flex;flex-direction:column}
.w-title{font-weight:700;color:#333}
.w-card{background:#fff}
.w-head{display:flex;align-items:center;border-bottom:1px solid #EEE}
.w-tab{display:block;flex:none;text-align:center;color:#666;white-space:nowrap;border-bottom:2px solid transparent}
.w-tab-on{color:#2463BE;border-bottom-color:#3F74BE;font-weight:500}
.w-filters{margin-left:auto;display:flex;align-items:center}
.w-check{display:block;border:1px solid #DDD;flex:none}
.w-mine{color:#444;white-space:nowrap}
.w-ctl{border:1px solid #E6E6E6;border-radius:2px;display:flex;align-items:center;white-space:nowrap;color:#777;background:#fff;position:relative;flex:none}
.w-scroll{position:absolute;right:1px;top:0;width:4px;background:#D8D9DC}
.red{position:absolute;display:block;border:3px solid #E8262A;border-radius:3px}

/* window A */
.win-a{left:657px;top:368px;width:1343px;height:655px}
.win-a .win-bar{height:36px;width:1336px;background:#0248A5;padding-left:9px}
.win-a .w-logo{width:16px;height:15px;margin-right:7px;color:#fff}
.win-a .w-brand{font-size:15.500px}
.win-a .caret{margin-left:4px}
.win-a .w-div{height:16px;margin:0 17px 0 23px}
.win-a .w-org{font-size:10.500px}
.win-a .w-org+.caret{margin-left:8px;border-width:3px 2px 0}
.win-a .w-icons{gap:16px;padding-right:14px}
.win-a .w-icons svg{width:14px;height:18px;display:block}
.win-a .w-badge{width:9px;height:11px;left:6px;top:-6px}
.win-a .win-side{width:46px;padding-top:12px}
.win-a .w-item{height:55px;font-size:8.500px}
.win-a .w-item svg{width:16px;height:20px;margin-bottom:3px}
.win-a .win-main{padding:0 20px 0 11px}
.win-a .w-title{font-size:13px;height:41px;line-height:40px}
.win-a .w-card{flex:1;padding:0 12px 0 14px}
.win-a .w-head{height:39px;margin:0 0 14px 0}
.win-a .w-tab{padding:0 21px;font-size:10px;line-height:37px;height:39px}
.win-a .w-filters{gap:10px;font-size:10px}
.win-a .w-check{width:11px;height:11px;margin-right:-5px}
.a-input{width:155px;height:22px;padding-left:11px;margin-left:-1px;color:#BBB;font-size:9.500px}
.w-q{position:absolute;right:6px;top:5px;width:9px;height:12px;color:#AAA}
.a-sel1{width:90px;height:22px;padding-left:10px}
.a-sel2{width:66px;height:22px;padding-left:10px;margin-right:4px}
.a-btn{width:55px;height:22px;justify-content:center;font-size:9px}
.a-sel1 .chev,.a-sel2 .chev{right:5px;width:5px;height:5px;top:40%}
.a-tbl{border-collapse:collapse;table-layout:fixed;width:1240px;font-size:10.200px;color:#666;font-family:"Liberation Sans","Noto Sans CJK SC",sans-serif}
.a-tbl th{height:33px;background:#E8F0FA;font-weight:400;text-align:left;padding-left:7px;color:#444;width:125.800px}
.a-tbl th:last-child{width:106px}
.a-tbl td{height:49.600px;padding-left:7px;line-height:17px;border-bottom:1px solid #F0F0F0;border-left:1px solid #F3F3F3;white-space:nowrap;font-size:9.200px;letter-spacing:-.5px}
.a-tbl .r1 td{height:34px}
.a-tbl .num{font-size:10px;letter-spacing:-.75px}
.r-tint td{background:#F7F8FB}
.a-ops{width:64px;height:14px;display:block;color:#2E63B5;margin-left:5px}
.a-red1{left:81px;top:80px;width:251px;height:30px}
.a-red2{left:1181px;top:76px;width:134px;height:39px}
.a-red3{left:1204px;top:165px;width:89px;height:469px}
.win-a .w-scroll{top:0;height:576px;right:2px}

/* window B */
.win-b{left:377px;top:522px;width:1041px;height:217px}
.win-b .win-bar{height:27px;background:#0248A5;padding-left:7px}
.win-b .w-logo{width:12px;height:11px;margin-right:4px;color:#fff}
.win-b .w-brand{font-size:11.500px}
.win-b .caret{margin-left:3px;border-width:3px 2px 0}
.win-b .w-div{height:12px;margin:0 12px 0 13px}
.win-b .w-org{font-size:8px}
.win-b .w-org+.caret{margin-left:5px}
.win-b .w-icons{gap:13px;padding-right:11px}
.win-b .w-icons svg{width:11px;height:14px;display:block}
.win-b .w-badge{width:7px;height:9px;left:5px;top:-5px}
.win-b .win-side{width:36px;padding-top:10px}
.win-b .w-item{height:42.500px;font-size:6.500px}
.win-b .w-item svg{width:12px;height:15px;margin-bottom:2px}
.win-b .win-main{padding:0 8px 0 9px}
.win-b .w-title{font-size:10px;height:32px;line-height:30px}
.win-b .w-card{flex:1;padding:0 12px 0 11px}
.win-b .w-head{height:29px;margin-bottom:12px}
.win-b .w-tab{padding:0 15.800px;font-size:7.700px;line-height:27px;height:29px}
.win-b .w-filters{gap:5px;font-size:7.700px}
.win-b .w-check{width:8px;height:8px}
.b-input{width:106px;height:17px;padding-left:15px;font-size:7.500px;color:#CCC}
.b-btn{width:43px;height:17px;justify-content:center;background:#D9E5F5;color:#2E6BC6;border-color:#C8D8EF;font-size:7.500px}
.b-tbl{border-collapse:collapse;table-layout:fixed;width:965px;font-size:7.700px;color:#666;font-family:"Liberation Sans","Noto Sans CJK SC",sans-serif}
.b-tbl th{height:26px;background:#E8F0FA;font-weight:400;text-align:left;padding-left:6px;width:160.800px;color:#555}
.b-tbl td{height:26px;padding-left:6px;border-bottom:1px solid #F0F0F0;border-left:1px solid #F3F3F3;white-space:nowrap;font-size:7.200px;letter-spacing:-.4px}
.b-tbl .num{font-size:7px;letter-spacing:-.35px}
.b-tbl td.b-op{padding-left:60px}
.b-ops{width:40px;height:12px;display:block;color:#2E63B5}
.b-pager{display:flex;align-items:center;justify-content:flex-end;font-size:7.500px;gap:11px;margin-top:8px;height:15px;color:#777}
.b-pager b{color:#2463BE;font-weight:500}
.b-size{width:52px;height:15px;border:1px solid #E6E6E6;display:flex;align-items:center;padding-left:8px;position:relative}
.b-size .chev{right:4px;width:4px;height:4px}
.b-jump{width:24px;height:15px;border:1px solid #E6E6E6;text-align:center;line-height:13px;margin:0 -7px}

/* window C + D share detail layout */
.win-c{left:175px;top:840px;width:1358px;height:665px}
.win-c .win-bar{height:36px;width:1353px;background:#1169D9;padding-left:11px}
.win-c .w-logo{width:16px;height:15px;margin-right:7px;color:#fff}
.win-c .w-brand{font-size:15.500px}
.win-c .caret{margin-left:4px}
.win-c .w-div{height:16px;margin:0 16px 0 23px}
.win-c .w-org{font-size:10.500px}
.win-c .w-org+.caret{margin-left:7px;border-width:3px 2px 0}
.win-c .w-icons{gap:16px;padding-right:14px}
.win-c .w-icons svg{width:14px;height:18px;display:block}
.win-c .win-side{width:47px;padding-top:10px;padding-bottom:32px}
.win-c .w-item{height:55.500px;font-size:9px}
.win-c .w-item svg{width:17px;height:20px;margin-bottom:4px}
.win-c .w-active::after{width:2px}
.win-c .w-avatar{width:28px;height:28px;margin-top:-4px}
.win-c .w-end{height:54px}
.win-c .win-main{padding:0 18px 0 14px;color:#666}
.w-back{display:flex;align-items:center;color:#333}
.w-back h3{font-weight:700}
.w-arrow{color:#555;display:block;flex:none}
.win-c .w-back{height:41px;gap:7px;padding-left:0}
.win-c .w-back h3{font-size:12.500px}
.win-c .w-arrow{width:11px;height:10px}
.d-cols{display:flex;flex:1;min-height:0}
.d-left{flex:none;display:flex;flex-direction:column;min-width:0}
.d-card{background:#fff;display:flex;flex-direction:column;flex:none}
.d-filters{display:flex;align-items:center}
.d-goal{margin-left:auto;white-space:nowrap;color:#333}
.d-legend{display:flex;align-items:center;justify-content:center;color:#666}
.d-legend span{white-space:nowrap}
.lg-dot{display:block;border:1px solid;border-radius:50%;background:#fff;flex:none;position:relative}
.lg-dot::before{content:"";position:absolute;left:-5px;right:-5px;top:50%;border-top:1px solid;z-index:-1}
.lg-dot.lg-blue{color:#6AA3F8}
.lg-dot.lg-green{color:#78BFB0}
.lg-sq.lg-blue{background:#6AA3F8}
.lg-sq.lg-green{background:#78BFB0}
.lg-sq{display:block;flex:none}
.d-chart{display:block;width:100%}
.grid path{stroke:#E4E4E4;fill:none}
.axis text{text-anchor:end;fill:#666}
.xlab text{text-anchor:middle;fill:#666}
.line-blue{fill:none;stroke:#6AA3F8;stroke-width:2}
.line-green{fill:none;stroke:#7FC4B5;stroke-width:3}
.pts circle{fill:#fff;stroke:#6AA3F8}
.bars rect{fill:#6AA3F8}
.bar-g{fill:#78BFB0}
.d-panel{background:#fff;flex:none}
.d-phead{background:#E8F1FB;color:#333;font-weight:700}
.d-info div{display:flex}
.d-info dd{margin-left:.6em}

.win-c .d-left{width:955px;margin-right:16px}
.win-c .d-panel{width:308px}
.win-c .d-card{height:349px;margin-bottom:14px}
.win-c .d-filters{height:43px;padding:6px 20px 0 14px;gap:9px;font-size:10px}
.win-c .d-range{width:156px;height:18px;padding-left:22px}
.win-c .d-metric{width:88px;height:18px;padding-left:10px}
.win-c .d-metric .chev{right:6px;width:5px;height:5px}
.win-c .d-goalv{width:117px;height:18px;padding-left:10px}
.win-c .d-legend{height:30px;font-size:10px;gap:6px;padding-right:10px}
.win-c .lg-dot{width:10px;height:10px}
.win-c .lg-green{margin-left:10px}
.win-c .d-chart{height:276px;font-size:10.500px}
.win-c .xlab text{font-size:10.500px}
.win-c .d-phead{height:25.500px;line-height:25px;padding-left:6px;font-size:10.500px}
.c-url{height:32px;margin:14px 14px 15px 13px;border:1px solid #E4E4E4;font-size:10.500px;line-height:30px;padding-left:10px;letter-spacing:-.02em;font-family:"Liberation Sans",sans-serif;white-space:nowrap;color:#555;box-shadow:0 1px 2px #EEE}
.win-c .d-info{font-size:10px;padding:15px 0 0 9px;color:#555}
.win-c .d-info div{height:28.300px;line-height:20px}
.d-kw{padding-left:10px}
.c-tbl{font-size:10.500px;background:#fff;color:#555}
.c-row{display:grid;grid-template-columns:109px 120px 1fr 60px;height:33.600px;align-items:center;border-bottom:1px solid #EEE}
.c-row>span{padding-left:8px;white-space:nowrap}
.c-row>span:last-child{text-align:right;padding-right:10px}
.c-row>span:nth-child(2){font-size:9.500px;letter-spacing:-1px}
.c-row .num{font-size:10.500px;letter-spacing:-.08em}
.c-hd{height:41px;background:#E8F1FB;font-weight:400;border:0}
.c-hd>span:nth-child(2){font-size:10.500px;letter-spacing:0}
.sort{color:#999;font-size:9px}
.c-red1{left:71px;top:86px;width:271px;height:36px}
.c-red2{left:816px;top:88px;width:189px;height:30px}
.win-c .w-scroll{height:540px;top:0;right:0}

.win-d{left:400px;top:1201px;width:748px;height:364px;box-shadow:0 0 0 1px #F2F2F2}
.win-d .win-bar{height:20px;width:743px;background:#1169D9;padding-left:5px}
.win-d .w-logo{width:8px;height:8px;margin-right:4px;color:#fff}
.win-d .w-brand{font-size:8.500px}
.win-d .caret{margin-left:3px;border-width:2px 1.500px 0}
.win-d .w-div{height:9px;margin:0 9px 0 12px}
.win-d .w-org{font-size:5.500px}
.win-d .w-icons{gap:9px;padding-right:8px}
.win-d .w-icons svg{width:7px;height:9px;display:block}
.win-d .win-side{width:26px;padding-top:5px;padding-bottom:19px}
.win-d .w-item{height:30.300px;font-size:4.500px}
.win-d .w-item svg{width:10px;height:12px;margin-bottom:2px}
.win-d .w-active::after{width:1px}
.win-d .w-avatar{width:14px;height:14px;margin-top:4px}
.win-d .w-end{height:22px}
.win-d .win-main{padding:0 13px 0 8px;color:#666}
.win-d .w-back{height:22px;gap:5px;padding-left:1px}
.win-d .w-back h3{font-size:6.500px}
.win-d .w-arrow{width:6px;height:6px}
.win-d .d-left{width:524px;margin-right:8px}
.win-d .d-panel{width:169px}
.win-d .d-card{height:195px;margin-bottom:8px}
.win-d .d-filters{height:25px;padding:0 12px 6px 8px;gap:5px;font-size:5.500px}
.win-d .d-range{width:85px;height:10px;padding-left:11px}
.win-d .d-metric{width:49px;height:10px;padding-left:6px}
.win-d .d-metric .chev{right:3px;width:3px;height:3px}
.win-d .d-goalv{width:63px;height:10px;padding-left:6px;color:#CCC}
.win-d .d-legend{height:22px;font-size:5px;gap:3px;padding-right:12px}
.win-d .lg-sq{width:9px;height:7px}
.win-d .lg-green{margin-left:4px}
.win-d .d-chart{height:148px}
.win-d .axis text{font-size:5.500px}
.win-d .xlab text{font-size:5.500px}
.d-tbl{border-collapse:collapse;table-layout:fixed;width:524px;font-size:5px;background:#fff;color:#666}
.d-tbl th{height:23px;background:#E8F1FB;font-weight:400;text-align:left;padding-left:4px;white-space:nowrap;width:65px;color:#555}
.d-tbl th:nth-child(6){width:131px}
.d-tbl th:nth-child(7){width:66px}
.d-tbl td{height:18.600px;text-align:right;padding-right:4px;border-bottom:1px solid #F0F0F0;border-left:1px solid #F4F4F4;white-space:nowrap}
.d-tbl td:nth-child(-n+2){text-align:left;padding-left:4px}
.win-d .d-phead{height:14px;line-height:14px;padding-left:3px;font-size:6px}
.win-d .d-info{font-size:5.500px;padding:8px 0 0 5px;color:#666}
.win-d .d-info div{height:15.500px;line-height:10px}
.win-d .w-scroll{height:290px;top:0;right:2px;width:3px}

/* notes */
.note{position:absolute;color:#3A3A3A}
.note-title{font-size:50px;line-height:50px;font-weight:700;color:#000;white-space:nowrap;text-shadow:1px 2px 2px #9A9A9A}
.note-list{list-style:none;padding-left:37px;font-size:31px;line-height:45px;font-weight:700;text-shadow:1px 2px 2px #BBB}
.note-list li{position:relative;white-space:nowrap}
.note-list li::before{content:"";position:absolute;left:-41px;top:19px;width:9px;height:9px;border-radius:50%;background:#3A3A3A}
.note-a{left:2199px;top:523px}
.note-a .note-title{margin:0 0 54px 21px}
.note-b{left:2161px;top:1090px}
.note-b .note-title{margin:0 0 52px 70px}

/* footer */
.foot{height:79px;flex:none;background:linear-gradient(90deg,#03AB9A 0%,#2F84F2 100%);display:flex;align-items:center;justify-content:space-between;padding:0 96px 0 100px;color:#fff}
.foot-url{font-family:"Open Sans",sans-serif;font-size:37px;letter-spacing:.6px;color:#E4F7F4}
.foot-slogan{font-size:28px;letter-spacing:9.800px;font-weight:500;color:#DDEBFA}
```
